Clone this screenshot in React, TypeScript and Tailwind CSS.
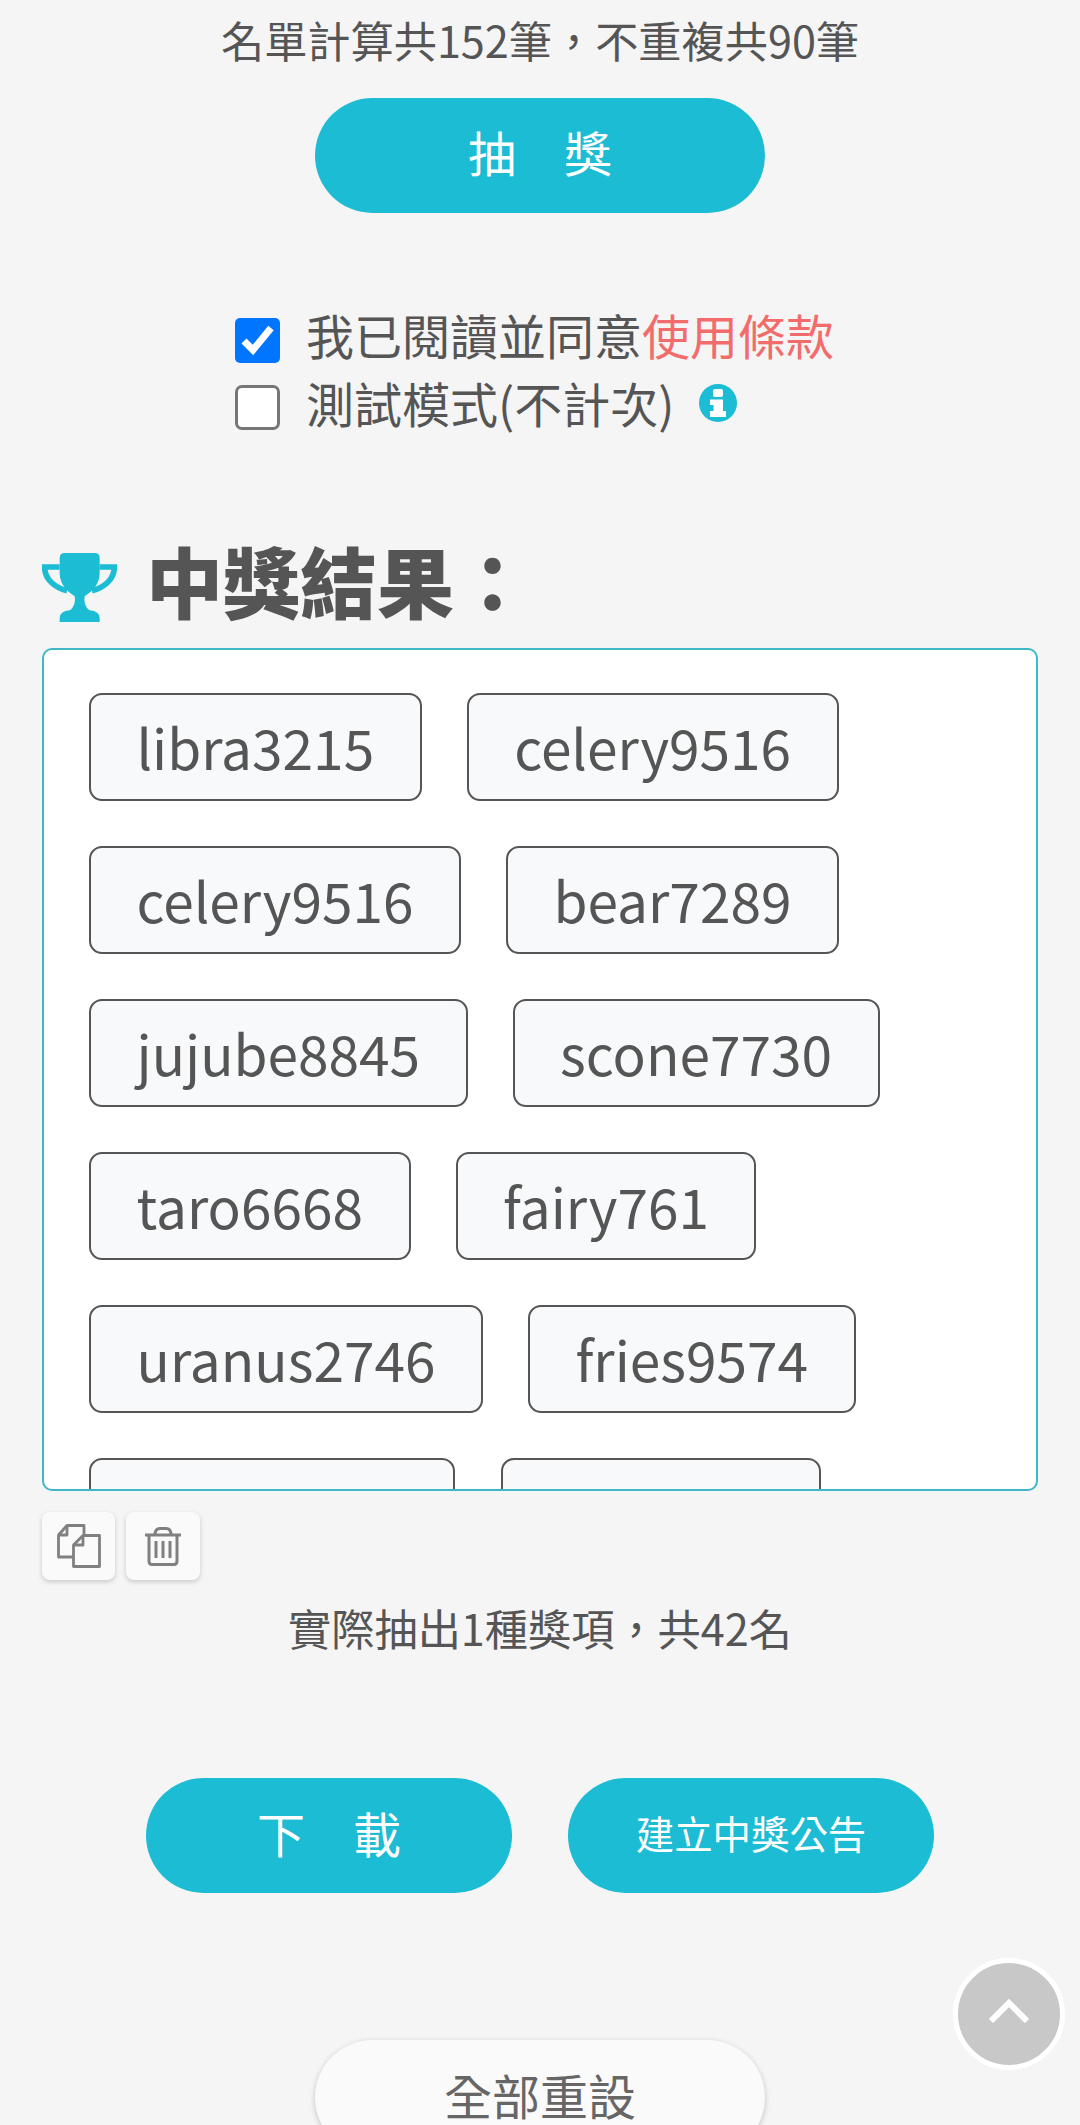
import React from 'react';

const rows = [
  ['libra3215', 'celery9516'],
  ['celery9516', 'bear7289'],
  ['jujube8845', 'scone7730'],
  ['taro6668', 'fairy761'],
  ['uranus2746', 'fries9574'],
];

function Tag({ name }: { name: string }) {
  return (
    <span className="box-border h-[108px] px-[45.5px] pb-[2px] flex items-center border-[2.5px] border-[#555] rounded-[13px] bg-[#f8f9fa] text-[55px] leading-[72px] text-[#555]">
      {name}
    </span>
  );
}

function TrophyIcon() {
  return (
    <svg width="75" height="69" viewBox="0 0 225 207" fill="#1bbcd4">
      <path d="M53 15 Q53 0 68 0 H158 Q173 0 173 15 V60 C173 95 150 115 128 130 C125 145 130 165 143 172 Q173 175 173 195 V207 H53 V195 Q53 175 83 172 C96 165 101 145 98 130 C76 115 53 95 53 60 Z" />
      <path d="M53 42 H8 C8 80 40 105 75 113 M173 42 H217 C217 80 185 105 150 113" fill="none" stroke="#1bbcd4" strokeWidth="17" />
    </svg>
  );
}

function InfoIcon() {
  return (
    <svg width="38" height="38" viewBox="0 0 38 38">
      <circle cx="19" cy="19" r="19" fill="#1bbcd4" />
      <rect x="14" y="5" width="10" height="8" rx="2" fill="#fff" />
      <path d="M11 15.5 H24 V27 H27 V33 H11 V27 H14.5 V21 H11 Z" fill="#fff" />
    </svg>
  );
}

function CopyIcon() {
  return (
    <svg width="44" height="44" viewBox="0 0 44 44" fill="none" stroke="#808080" strokeWidth="2.8" strokeLinejoin="round">
      <path d="M16 33 H1.5 V11 L10 1.5 H27 V10" />
      <path d="M10 1.5 V11 H1.5" />
      <path d="M26 11.5 H42.5 V42.5 H16.5 V21 Z" />
      <path d="M26 11.5 V21 H16.5" />
    </svg>
  );
}

function TrashIcon() {
  return (
    <svg width="36" height="39" viewBox="0 0 36 39" fill="none" stroke="#808080" strokeWidth="3">
      <path d="M0 8 H36" />
      <path d="M10 8 C10 3 12 1.5 15 1.5 H21 C24 1.5 26 3 26 8" />
      <path d="M4 8 V34 C4 36 5 37.5 7 37.5 H29 C31 37.5 32 36 32 34 V8" />
      <path d="M11 14 V31 M18 14 V31 M25 14 V31" />
    </svg>
  );
}

function PillButton({ children, small }: { children: React.ReactNode; small?: boolean }) {
  return (
    <button className={small
      ? 'w-[366px] h-[115px] pb-[6px] rounded-full bg-[#1bbcd4] text-white text-[38.4px]'
      : 'w-[366px] h-[115px] pb-[8px] rounded-full bg-[#1bbcd4] text-white text-[48px]'}>
      {children}
    </button>
  );
}

export default function App() {
  return (
    <div className="relative h-[2125px] overflow-hidden bg-[#f5f5f5] text-[#555] font-['Noto_Sans_CJK_TC',sans-serif]">
      <p className="pt-[7px] pb-[3px] text-center text-[43.2px] leading-[64px]">{'名單計算共152筆\uFF0C不重複共90筆'}</p>

      <div className="mt-[24px] flex justify-center">
        <button className="w-[450px] h-[115px] pb-[10px] rounded-full bg-[#1bbcd4] text-white text-[48px]">{'抽\u3000獎'}</button>
      </div>

      <div className="mt-[94px] ml-[235px] text-[48px] leading-[72px]">
        <div className="flex items-center gap-[26px] h-[67px]">
          <span className="box-border w-[45px] h-[45px] rounded-[5px] bg-[#0075ff]">
            <svg width="45" height="45" viewBox="0 0 45 45" fill="none" stroke="#fff" strokeWidth="7">
              <path d="M9 23 L18 32 L36 10" />
            </svg>
          </span>
          <span className="pb-[14px]">
            我已閱讀並同意<span className="text-[#f26c6c]">使用條款</span>
          </span>
        </div>
        <div className="flex items-center gap-[26px] h-[67px]">
          <span className="box-border w-[45px] h-[45px] rounded-[7px] bg-white border-[3px] border-[#767676]" />
          <span className="pb-[12px]">測試模式(不計次)</span>
          <span className="ml-[-1px] pb-[10px]">
            <InfoIcon />
          </span>
        </div>
      </div>

      <div className="mt-[101px] mx-[42px] flex items-center gap-[29px] h-[90px]">
        <TrophyIcon />
        <h2 className="pb-[14px] text-[77px] leading-[90px] font-black">{'中獎結果\uFF1A'}</h2>
      </div>

      <div className="mt-[16px] mx-[42px] box-border h-[843px] overflow-hidden rounded-[10px] border-[2.5px] border-[#3fb7c7] bg-white pt-[43px] pl-[45px]">
        <div className="flex flex-col gap-[45px]">
          {rows.map((row, i) => (
            <div key={i} className="flex gap-[45px]">
              {row.map((name, j) => (
                <Tag key={j} name={name} />
              ))}
            </div>
          ))}
          <div className="flex gap-[46px]">
            <span className="box-border w-[366px] h-[108px] border-[2.5px] border-[#555] rounded-[13px] bg-[#f8f9fa]" />
            <span className="box-border w-[320px] h-[108px] border-[2.5px] border-[#555] rounded-[13px] bg-[#f8f9fa]" />
          </div>
        </div>
      </div>

      <div className="mt-[21px] mx-[42px] flex gap-[11px]">
        <button className="w-[73px] h-[68px] rounded-[8px] bg-[#fafafa] shadow-[0_2px_5px_rgba(0,0,0,0.18)] flex items-center justify-center">
          <CopyIcon />
        </button>
        <button className="w-[74px] h-[68px] rounded-[8px] bg-[#fafafa] shadow-[0_2px_5px_rgba(0,0,0,0.18)] flex items-center justify-center">
          <TrashIcon />
        </button>
      </div>

      <p className="mt-[15px] pb-[3px] text-center text-[43.2px] leading-[64px]">{'實際抽出1種獎項\uFF0C共42名'}</p>

      <div className="mt-[116px] flex justify-center gap-[56px]">
        <PillButton>{'下\u3000載'}</PillButton>
        <PillButton small>建立中獎公告</PillButton>
      </div>

      <div className="mt-[147px] flex justify-center">
        <button className="w-[450px] h-[115px] pb-[8px] rounded-full bg-[#fafafa] text-[#666] text-[48px] shadow-[0_2px_6px_rgba(0,0,0,0.2)]">全部重設</button>
      </div>

      <button className="absolute left-[953px] top-[1958px] box-border w-[112px] h-[112px] rounded-full border-[5px] border-white bg-[#c8c8c8] flex items-center justify-center">
        <svg width="40" height="24" viewBox="0 0 40 24" fill="none" stroke="#fff" strokeWidth="6" className="mb-[6px]">
          <path d="M2 22 L20 4 L38 22" />
        </svg>
      </button>
    </div>
  );
}
